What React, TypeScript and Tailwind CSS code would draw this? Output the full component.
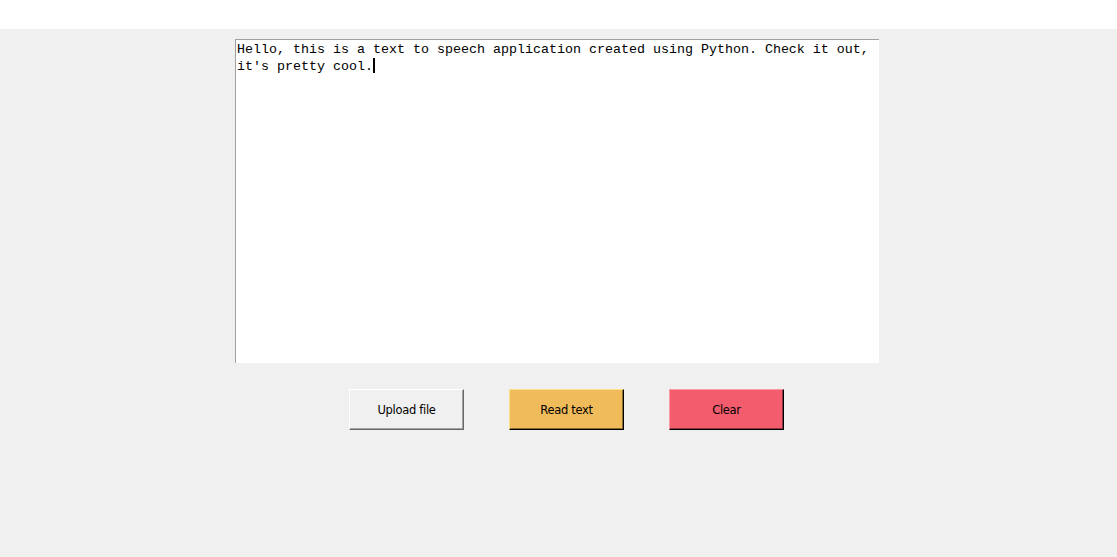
export default function App() {
  return (
    <div className="w-[1117px] h-[557px] flex flex-col bg-[#f0f0f0] font-['Liberation_Sans',sans-serif]">
      <div className="h-[29px] bg-white" />

      <div className="pt-[10px] pl-[235px]">
        <div className="w-[644px] h-[324px] bg-white border-t border-l border-[#a0a0a0] pt-[2px] pl-[1px] pr-[4px] font-['Liberation_Mono',monospace] text-[13.33px] leading-[16px] text-black whitespace-pre-wrap">
          {"Hello, this is a text to speech application created using Python. Check it out,\nit's pretty cool."}
          <span className="inline-block w-[2px] h-[15px] bg-black align-[-3px]" />
        </div>
      </div>

      <div className="pt-[26px] pl-[349px] flex gap-[45px]">
        <button className="w-[115px] h-[41px] pt-[2px] bg-[#f0f0f0] border-t border-l border-white border-b border-r border-b-[#696969] border-r-[#696969] shadow-[inset_-1px_-1px_0_#a0a0a0] text-[11.5px] text-black font-['DejaVu_Sans',sans-serif] tracking-[-0.3px]">
          Upload file
        </button>
        <button className="w-[115px] h-[41px] pt-[2px] bg-[#f0bb5b] border-t border-l border-[#fde08a] border-b border-r border-b-black border-r-black shadow-[inset_-1px_-1px_0_#8a6a2e] text-[11.5px] text-black font-['DejaVu_Sans',sans-serif] tracking-[-0.3px]">
          Read text
        </button>
        <button className="w-[115px] h-[41px] pt-[2px] bg-[#f25c6c] border-t border-l border-[#fa9aa4] border-b border-r border-b-black border-r-black shadow-[inset_-1px_-1px_0_#8c3440] text-[11.5px] text-black font-['DejaVu_Sans',sans-serif] tracking-[-0.3px]">
          Clear
        </button>
      </div>
    </div>
  );
}
